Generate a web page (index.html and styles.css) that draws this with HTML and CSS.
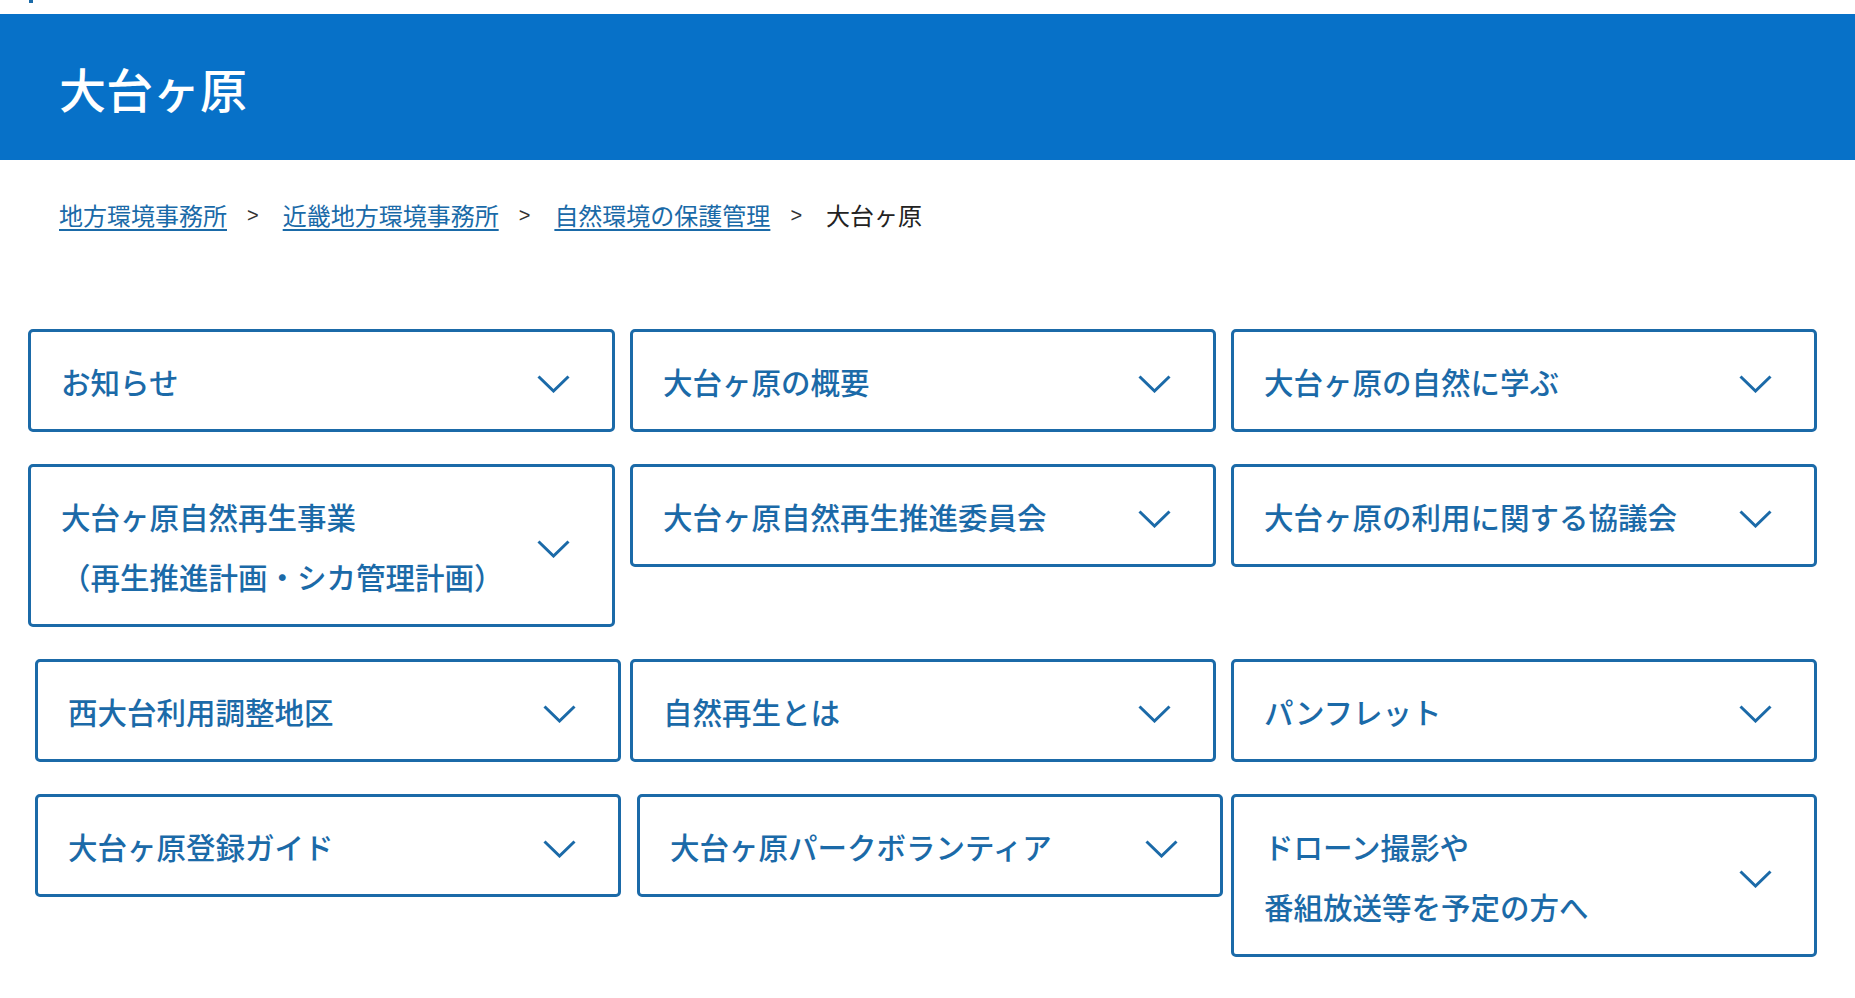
FILE: index.html
```html
<!DOCTYPE html>
<html lang="ja">
<head>
	<meta charset="UTF-8">
	<title>大台ヶ原</title>
	<link rel="stylesheet" href="styles.css">
</head>
<body>
	<div class="topbar"><span class="topbar-mark"></span></div>
	<header class="page-head">
		<h1>大台ヶ原</h1>
	</header>
	<nav class="crumbs">
		<a href="#">地方環境事務所</a>
		<span class="sep">&gt;</span>
		<a href="#">近畿地方環境事務所</a>
		<span class="sep">&gt;</span>
		<a href="#">自然環境の保護管理</a>
		<span class="sep">&gt;</span>
		<span class="current">大台ヶ原</span>
	</nav>
	<!--メニュー-->
	<div class="menu">
		<a class="menu-item" href="#"><span>お知らせ</span><svg viewBox="0 0 33 18"><polyline points="1.5,1.5 16.5,16 31.5,1.5"/></svg></a>
		<a class="menu-item" href="#"><span>大台ヶ原の概要</span><svg viewBox="0 0 33 18"><polyline points="1.5,1.5 16.5,16 31.5,1.5"/></svg></a>
		<a class="menu-item" href="#"><span>大台ヶ原の自然に学ぶ</span><svg viewBox="0 0 33 18"><polyline points="1.5,1.5 16.5,16 31.5,1.5"/></svg></a>

		<a class="menu-item" href="#"><span>大台ヶ原自然再生事業<br>（再生推進計画・シカ管理計画）</span><svg viewBox="0 0 33 18"><polyline points="1.5,1.5 16.5,16 31.5,1.5"/></svg></a>
		<a class="menu-item" href="#"><span>大台ヶ原自然再生推進委員会</span><svg viewBox="0 0 33 18"><polyline points="1.5,1.5 16.5,16 31.5,1.5"/></svg></a>
		<a class="menu-item" href="#"><span>大台ヶ原の利用に関する協議会</span><svg viewBox="0 0 33 18"><polyline points="1.5,1.5 16.5,16 31.5,1.5"/></svg></a>

		<a class="menu-item shifted" href="#"><span>西大台利用調整地区</span><svg viewBox="0 0 33 18"><polyline points="1.5,1.5 16.5,16 31.5,1.5"/></svg></a>
		<a class="menu-item" href="#"><span>自然再生とは</span><svg viewBox="0 0 33 18"><polyline points="1.5,1.5 16.5,16 31.5,1.5"/></svg></a>
		<a class="menu-item" href="#"><span>パンフレット</span><svg viewBox="0 0 33 18"><polyline points="1.5,1.5 16.5,16 31.5,1.5"/></svg></a>

		<a class="menu-item shifted" href="#"><span>大台ヶ原登録ガイド</span><svg viewBox="0 0 33 18"><polyline points="1.5,1.5 16.5,16 31.5,1.5"/></svg></a>
		<a class="menu-item shifted" href="#"><span>大台ヶ原パークボランティア</span><svg viewBox="0 0 33 18"><polyline points="1.5,1.5 16.5,16 31.5,1.5"/></svg></a>
		<a class="menu-item" href="#"><span>ドローン撮影や<br>番組放送等を予定の方へ</span><svg viewBox="0 0 33 18"><polyline points="1.5,1.5 16.5,16 31.5,1.5"/></svg></a>
	</div>
</body>
</html>
```
FILE: styles.css
```css
body{
	margin:0;
	background:#fff;
	font-family:"Noto Sans CJK JP","Noto Sans",sans-serif;
	color:#222;
}
.topbar{
	height:14px;
}
.topbar-mark{
	display:block;
	width:4px;
	height:3px;
	margin-left:29px;
	background:#1a6aa8;
}
/*見出し*/
.page-head{
	background:#0771c8;
	height:146px;
	display:flex;
	align-items:center;
	padding-left:59px;
}
.page-head h1{
	margin:0;
	color:#fff;
	font-size:47px;
	font-weight:500;
	line-height:1;
}
/*パンくず*/
.crumbs{
	padding:38px 0 0 59px;
	height:78px;
	font-size:24px;
	line-height:34px;
	display:flex;
	align-items:flex-start;
}
.crumbs a{
	color:#1a6aa8;
	text-decoration:underline;
	text-underline-offset:4px;
}
.crumbs .sep{
	font-family:"Liberation Sans",sans-serif;
	font-size:20px;
	color:#333;
	margin:0 24px 0 20px;
}
.crumbs .current{
	color:#222;
}
/*メニュー*/
.menu{
	display:grid;
	grid-template-columns:587px 586px 586px;
	column-gap:15px;
	row-gap:32px;
	align-items:start;
	padding:53px 0 40px 28px;
}
.menu-item{
	box-sizing:border-box;
	width:100%;
	display:flex;
	align-items:center;
	justify-content:space-between;
	border:3px solid #1b6aa8;
	border-radius:5px;
	padding:18.5px 42px 18.5px 30px;
	color:#1b6aa8;
	text-decoration:none;
	font-size:29.5px;
	font-weight:500;
	line-height:60px;
}
.menu-item.shifted{
	width:586px;
	margin-left:7px;
}
.menu-item svg{
	width:33px;
	height:18px;
	flex:none;
	margin-top:6px;
	fill:none;
	stroke:#1b6aa8;
	stroke-width:3;
}
```
